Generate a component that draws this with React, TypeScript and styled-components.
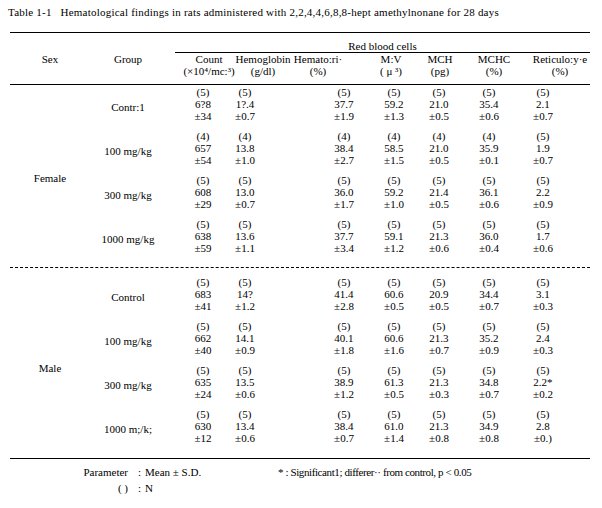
import React from "react";
import styled, { createGlobalStyle } from "styled-components";

const GlobalStyle = createGlobalStyle`
  html, body {
    margin: 0;
    padding: 0;
    background: #fff;
  }
  body {
    font-family: "Liberation Serif", "Times New Roman", serif;
    font-size: 11px;
    color: #000;
  }
`;

// x centres of every column, taken from the page's left edge
const HEAD_CENTERS = [50, 128, 209, 263, 318, 391, 440, 494, 560];
const DATA_CENTERS = [128, 203, 245, 344, 394, 439, 489, 543];

const tracks = (centers: number[], end: number) =>
  centers
    .map((c, i) => (i < centers.length - 1 ? centers[i + 1] - c : end - c) + "px")
    .join(" ");

interface Cell {
  n: string;
  v: string;
  sd: string;
}

interface Group {
  label: string;
  cells: Cell[];
}

interface Sex {
  label: string;
  groups: Group[];
}

const c = (n: string, v: string, sd: string): Cell => ({ n, v, sd });

const data: Sex[] = [
  {
    label: "Female",
    groups: [
      {
        label: "Contr:1",
        cells: [
          c("(5)", "6?8", "±34"),
          c("(5)", "1?.4", "±0.7"),
          c("(5)", "37.7", "±1.9"),
          c("(5)", "59.2", "±1.3"),
          c("(5)", "21.0", "±0.5"),
          c("(5)", "35.4", "±0.6"),
          c("(5)", "2.1", "±0.7"),
        ],
      },
      {
        label: "100 mg/kg",
        cells: [
          c("(4)", "657", "±54"),
          c("(4)", "13.8", "±1.0"),
          c("(4)", "38.4", "±2.7"),
          c("(4)", "58.5", "±1.5"),
          c("(4)", "21.0", "±0.5"),
          c("(4)", "35.9", "±0.1"),
          c("(5)", "1.9", "±0.7"),
        ],
      },
      {
        label: "300 mg/kg",
        cells: [
          c("(5)", "608", "±29"),
          c("(5)", "13.0", "±0.7"),
          c("(5)", "36.0", "±1.7"),
          c("(5)", "59.2", "±1.0"),
          c("(5)", "21.4", "±0.5"),
          c("(5)", "36.1", "±0.6"),
          c("(5)", "2.2", "±0.9"),
        ],
      },
      {
        label: "1000 mg/kg",
        cells: [
          c("(5)", "638", "±59"),
          c("(5)", "13.6", "±1.1"),
          c("(5)", "37.7", "±3.4"),
          c("(5)", "59.1", "±1.2"),
          c("(5)", "21.3", "±0.6"),
          c("(5)", "36.0", "±0.4"),
          c("(5)", "1.7", "±0.6"),
        ],
      },
    ],
  },
  {
    label: "Male",
    groups: [
      {
        label: "Control",
        cells: [
          c("(5)", "683", "±41"),
          c("(5)", "14?", "±1.2"),
          c("(5)", "41.4", "±2.8"),
          c("(5)", "60.6", "±0.5"),
          c("(5)", "20.9", "±0.5"),
          c("(5)", "34.4", "±0.7"),
          c("(5)", "3.1", "±0.3"),
        ],
      },
      {
        label: "100 mg/kg",
        cells: [
          c("(5)", "662", "±40"),
          c("(5)", "14.1", "±0.9"),
          c("(5)", "40.1", "±1.8"),
          c("(5)", "60.6", "±1.6"),
          c("(5)", "21.3", "±0.7"),
          c("(5)", "35.2", "±0.9"),
          c("(5)", "2.4", "±0.3"),
        ],
      },
      {
        label: "300 mg/kg",
        cells: [
          c("(5)", "635", "±24"),
          c("(5)", "13.5", "±0.6"),
          c("(5)", "38.9", "±1.2"),
          c("(5)", "61.3", "±0.5"),
          c("(5)", "21.3", "±0.3"),
          c("(5)", "34.8", "±0.7"),
          c("(5)", "2.2*", "±0.2"),
        ],
      },
      {
        label: "1000 m;/k;",
        cells: [
          c("(5)", "630", "±12"),
          c("(5)", "13.4", "±0.6"),
          c("(5)", "38.4", "±0.7"),
          c("(5)", "61.0", "±1.4"),
          c("(5)", "21.3", "±0.8"),
          c("(5)", "34.9", "±0.8"),
          c("(5)", "2.8", "±0.)"),
        ],
      },
    ],
  },
];

const headers: [string, string][] = [
  ["Count", "(×10⁴/mc:³)"],
  ["Hemoglobin", "(g/dl)"],
  ["Hemato:ri·", "(%)"],
  ["M:V", "( μ ³)"],
  ["MCH", "(pg)"],
  ["MCHC", "(%)"],
  ["Reticulo:y·e", "(%)"],
];

export default function App() {
  return (
    <Page>
      <GlobalStyle />
      <Title>Table 1-1   Hematological findings in rats administered with 2,2,4,4,6,8,8-hept amethylnonane for 28 days</Title>
      <Table>
        <Header>
          <SuperHead>Red blood cells</SuperHead>
          <HeadRow $cols={tracks(HEAD_CENTERS, 590)}>
            <Anchor>Sex</Anchor>
            <Anchor>Group</Anchor>
            {headers.map(([a, b]) => (
              <Anchor key={a}>
                {a}
                <br />
                {b}
              </Anchor>
            ))}
          </HeadRow>
        </Header>
        {data.map((sex, i) => (
          <Section key={sex.label} $first={i === 0}>
            <SexLabel>{sex.label}</SexLabel>
            <Blocks>
              {sex.groups.map((g) => (
                <Block key={g.label} $cols={tracks(DATA_CENTERS, 590)}>
                  <GroupLabel>
                    <Anchor>{g.label}</Anchor>
                  </GroupLabel>
                  {g.cells.map((cell, k) => (
                    <Anchor key={k}>
                      {cell.n}
                      <br />
                      {cell.v}
                      <br />
                      {cell.sd}
                    </Anchor>
                  ))}
                </Block>
              ))}
            </Blocks>
          </Section>
        ))}
      </Table>
      <Footer>
        <FootLabel>Parameter</FootLabel>
        <Colon>:</Colon>
        <span>Mean ± S.D.</span>
        <Note>* : Significant1; differer·· from control, p &lt; 0.05</Note>
        <FootLabel>( )</FootLabel>
        <Colon>:</Colon>
        <span>N</span>
        <span />
      </Footer>
    </Page>
  );
}

const Page = styled.div`
  width: 580px;
  padding: 5px 12px 0 10px;
`;

const Title = styled.div`
  margin: 0 0 13px -2px;
  line-height: 14px;
  letter-spacing: 0.22px;
  white-space: pre;
`;

const Table = styled.div`
  border-top: 1px solid #000;
  border-bottom: 1px solid #000;
`;

const Header = styled.div`
  border-bottom: 1px solid #000;
`;

const SuperHead = styled.div`
  margin-left: 165px;
  padding-top: 7px;
  line-height: 12px;
  text-align: center;
  border-bottom: 1px solid #000;
`;

const HeadRow = styled.div<{ $cols: string }>`
  display: grid;
  grid-template-columns: ${(p) => p.$cols};
  padding: 0 0 7px 40px;
  line-height: 12px;
`;

const Anchor = styled.div`
  width: max-content;
  transform: translateX(-50%);
  text-align: center;
  white-space: nowrap;
`;

const Section = styled.div<{ $first: boolean }>`
  display: grid;
  grid-template-columns: 80px 1fr;
  padding: ${(p) => (p.$first ? "1px 0 13px" : "8px 0 14px")};
  border-bottom: ${(p) => (p.$first ? "1px dashed #000" : "none")};
`;

const SexLabel = styled.div`
  align-self: center;
  text-align: center;
  padding-top: 16px;
`;

const Blocks = styled.div`
  display: flex;
  flex-direction: column;
  gap: 8px;
`;

const Block = styled.div<{ $cols: string }>`
  display: grid;
  grid-template-columns: ${(p) => p.$cols};
  padding-left: 38px;
  line-height: 12px;
`;

const GroupLabel = styled.div`
  padding-top: 15px;
`;

const Footer = styled.div`
  display: grid;
  grid-template-columns: 118px 17px 133px auto;
  padding-top: 5px;
  line-height: 16px;
`;

const FootLabel = styled.span`
  text-align: right;
`;

const Colon = styled.span`
  text-align: center;
  padding-left: 6px;
`;

const Note = styled.span`
  letter-spacing: -0.4px;
`;
